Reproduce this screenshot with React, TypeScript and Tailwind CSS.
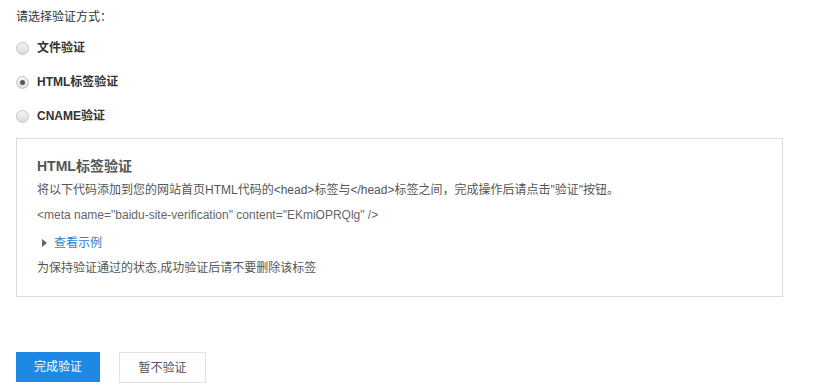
const font = { fontFamily: '"Liberation Sans", "Noto Sans CJK SC", sans-serif' };

type Option = { key: string; label: string };

const options: Option[] = [
  { key: 'file', label: '文件验证' },
  { key: 'html', label: 'HTML标签验证' },
  { key: 'cname', label: 'CNAME验证' },
];

function Radio({ checked }: { checked: boolean }) {
  return (
    <span className="flex h-[13px] w-[13px] items-center justify-center rounded-full border border-[#c4c4c4] bg-gradient-to-b from-[#f4f4f4] to-[#dcdcdc]">
      {checked && <span className="h-[5px] w-[5px] rounded-full bg-[#555]" />}
    </span>
  );
}

export default function App() {
  const selected = 'html';

  return (
    <div className="min-h-[390px] w-[816px] bg-white pl-4 pt-2 text-[12px] text-[#333]" style={font}>
      <div className="flex h-[18px] items-center">请选择验证方式：</div>

      <div className="mt-[5px] flex flex-col">
        {options.map((o) => (
          <label key={o.key} className="flex h-[34px] items-center gap-[8px]">
            <Radio checked={o.key === selected} />
            <span className="font-bold text-[#333]">{o.label}</span>
          </label>
        ))}
      </div>

      <div className="mt-[5px] box-border h-[159px] w-[767px] border border-[#dddddd] px-5 pt-[17px]">
        <h2 className="flex h-[20px] items-center text-[14px] font-bold text-[#555]">HTML标签验证</h2>
        <p className="mt-[2px] flex h-[24px] items-center text-[#555]">
          将以下代码添加到您的网站首页HTML代码的&lt;head&gt;标签与&lt;/head&gt;标签之间，完成操作后请点击"验证"按钮。
        </p>
        <p className="flex h-[26px] items-center text-[#666]">
          &lt;meta name="baidu-site-verification" content="EKmiOPRQlg" /&gt;
        </p>
        <div className="flex h-[30px] items-center gap-[7px] pl-[5px]">
          <span className="h-0 w-0 border-y-[4px] border-l-[5px] border-y-transparent border-l-[#666]" />
          <a className="cursor-pointer text-[#2a7fd4]">查看示例</a>
        </div>
        <p className="flex h-[20px] items-center text-[#555]">为保持验证通过的状态,成功验证后请不要删除该标签</p>
      </div>

      <div className="mt-[55px] flex gap-[19px]">
        <button className="h-[30px] w-[84px] bg-[#1e88e5] text-[12px] text-white">完成验证</button>
        <button className="h-[31px] w-[87px] border border-[#e3e3e3] bg-white text-[12px] text-[#555]">暂不验证</button>
      </div>
    </div>
  );
}
